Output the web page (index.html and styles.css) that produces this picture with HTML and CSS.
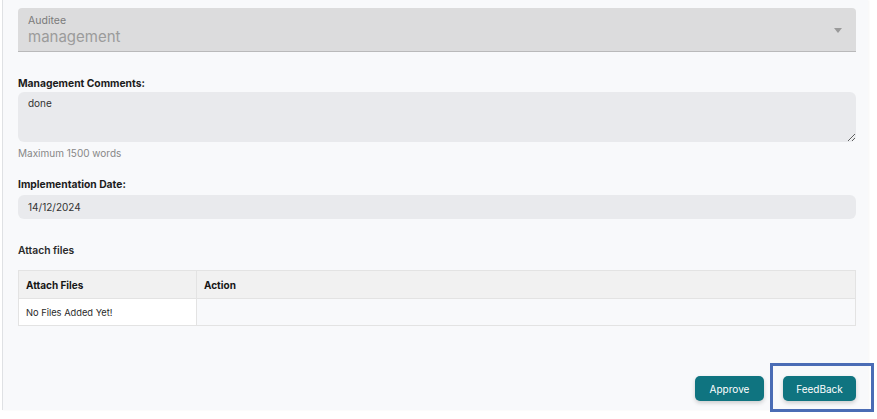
FILE: index.html
```html
<!DOCTYPE html>
<html lang="en">
<head>
<meta charset="utf-8">
<title>Audit Response</title>
<link rel="stylesheet" href="styles.css">
</head>
<body>
<div class="card">
  <div class="select">
    <div class="select-label">Auditee</div>
    <div class="select-value">management</div>
    <svg class="select-arrow" width="8" height="5" viewBox="0 0 8 5"><path d="M0 0h8L4 5z" fill="#9a9a9a"/></svg>
  </div>

  <div class="label label-comments">Management Comments:</div>
  <textarea class="textarea" readonly>done</textarea>
  <div class="hint">Maximum 1500 words</div>

  <div class="label label-date">Implementation Date:</div>
  <div class="date">14/12/2024</div>

  <div class="label label-attach">Attach files</div>
  <table class="files">
    <thead>
      <tr><th class="col-files">Attach Files</th><th>Action</th></tr>
    </thead>
    <tbody>
      <tr><td class="col-files cell-white">No Files Added Yet!</td><td></td></tr>
    </tbody>
  </table>

  <div class="actions">
    <button class="btn btn-approve">Approve</button>
    <div class="highlight-wrap">
      <button class="btn btn-feedback">FeedBack</button>
      <div class="highlight"></div>
    </div>
  </div>
</div>
</body>
</html>
```

FILE: styles.css
```css
html, body {
  margin: 0;
  padding: 0;
  background: #ffffff;
}
html {
  min-height: 419px;
}
body {
  min-height: 419px;
  font-family: Inter, "Open Sans", "Liberation Sans", sans-serif;
  color: #222;
}
.card {
  margin-left: 2px;
  width: 838px;
  height: 402px;
  padding: 8px 12px 0 15px;
  background: #f8f9fb;
  border-left: 1px solid #dfe1e4;
  box-shadow: 1px 0 2px rgba(0,0,0,0.04);
}
.select {
  position: relative;
  box-sizing: border-box;
  height: 44px;
  background: #dcdcdd;
  border-bottom: 1px solid #b9b9ba;
  border-radius: 4px 4px 0 0;
  padding-left: 10px;
}
.select-label {
  padding-top: 6px;
  font-size: 10.5px;
  line-height: 13px;
  color: #7a7a7a;
}
.select-value {
  font-size: 15px;
  line-height: 19px;
  color: #9b9b9b;
}
.select-arrow {
  position: absolute;
  right: 14px;
  top: 20px;
}
.label {
  font-size: 10.3px;
  font-weight: 700;
  line-height: 14px;
  color: #1c1c1c;
}
.label-comments { margin-top: 24px; }
.label-date { margin-top: 17px; }
.label-attach { margin-top: 24px; font-weight: 600; color: #2a2a2a; }
.textarea {
  display: block;
  margin-top: 2px;
  width: 100%;
  height: 50px;
  box-sizing: border-box;
  border: none;
  border-radius: 6px;
  background: #e9eaed;
  padding: 4px 10px;
  font-family: inherit;
  font-size: 10px;
  line-height: 14px;
  color: #333;
  resize: vertical;
  outline: none;
}
.hint {
  margin-top: 4px;
  font-size: 10px;
  line-height: 14px;
  color: #878787;
}
.date {
  margin-top: 4px;
  height: 24px;
  border-radius: 6px;
  background: #e9eaed;
  padding-left: 10px;
  font-size: 10px;
  line-height: 24px;
  color: #333;
}
.files {
  margin-top: 13px;
  width: 100%;
  border-collapse: collapse;
  font-size: 10px;
}
.files th {
  height: 28px;
  box-sizing: border-box;
  padding: 0 7px;
  text-align: left;
  font-weight: 700;
  background: #f1f1f1;
  border: 1px solid #e3e3e3;
  color: #161616;
}
.files td {
  height: 27px;
  box-sizing: border-box;
  padding: 0 7px;
  border: 1px solid #e3e3e3;
  color: #2a2a2a;
  font-size: 9.3px;
}
.files .col-files { width: 178px; }
.cell-white { background: #ffffff; }
.actions {
  margin-top: 50px;
  display: flex;
  justify-content: flex-end;
  align-items: center;
  gap: 19px;
}
.btn {
  height: 25px;
  border: none;
  border-radius: 5px;
  background: #0f7480;
  color: #ffffff;
  font-family: inherit;
  font-size: 10px;
  box-shadow: 0 2px 4px rgba(0,0,0,0.18);
}
.btn-approve { width: 69px; padding: 0; }
.btn-feedback { width: 73px; padding: 0; }
.highlight-wrap {
  position: relative;
  display: flex;
}
.highlight {
  position: absolute;
  left: -13px;
  top: -13px;
  width: 98px;
  height: 43px;
  border: 3px solid #4a6cb5;
  pointer-events: none;
}
```
